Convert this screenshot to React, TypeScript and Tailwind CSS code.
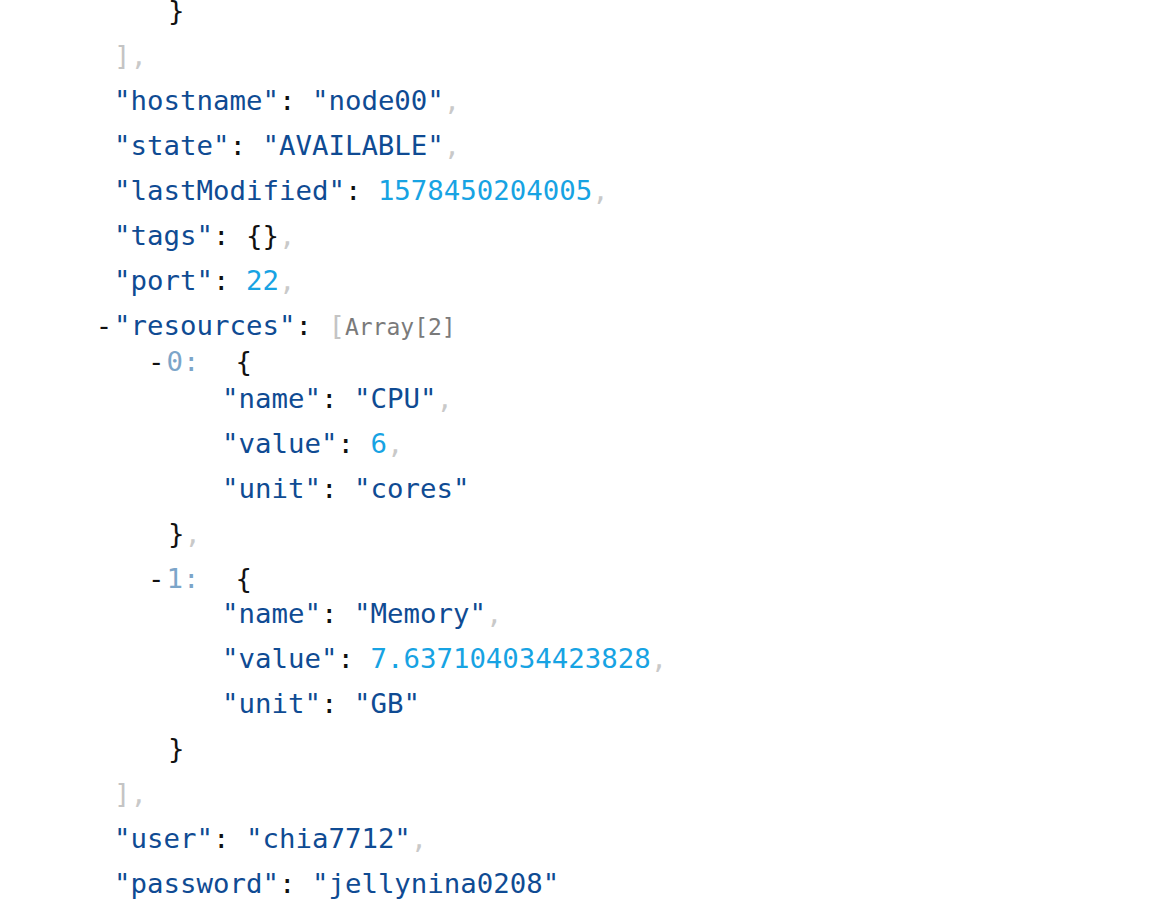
import React from "react";

const K = ({ children }: { children: React.ReactNode }) => (
  <span className="text-[#0f4b93]">{children}</span>
);
const S = ({ children }: { children: React.ReactNode }) => (
  <span className="text-[#0f4b93]">{children}</span>
);
const N = ({ children }: { children: React.ReactNode }) => (
  <span className="text-[#17a3e3]">{children}</span>
);
const P = ({ children }: { children: React.ReactNode }) => (
  <span className="text-[#111111]">{children}</span>
);
const C = () => <span className="text-[#c9c9c9]">,</span>;

function Row({
  children,
  className = "h-[45px] leading-[45px]",
  indent = "pl-0",
}: {
  children: React.ReactNode;
  className?: string;
  indent?: string;
}) {
  return <div className={`whitespace-pre ${className} ${indent}`}>{children}</div>;
}

function KV({ k, v, comma = true }: { k: string; v: React.ReactNode; comma?: boolean }) {
  return (
    <>
      <K>"{k}"</K>
      <P>: </P>
      {v}
      {comma && <C />}
    </>
  );
}

export default function App() {
  return (
    <div className="w-[1154px] h-[902px] overflow-hidden bg-white">
      <div
        className="-mt-[12px] pl-[114px] text-[27.4px]"
        style={{ fontFamily: '"DejaVu Sans Mono", "Liberation Mono", monospace' }}
      >
        <Row indent="pl-[54px]">
          <P>{"}"}</P>
        </Row>
        <Row>
          <span className="text-[#c4c4c4]">]</span>
          <C />
        </Row>
        <Row>
          <KV k="hostname" v={<S>"node00"</S>} />
        </Row>
        <Row>
          <KV k="state" v={<S>"AVAILABLE"</S>} />
        </Row>
        <Row>
          <KV k="lastModified" v={<N>1578450204005</N>} />
        </Row>
        <Row>
          <KV k="tags" v={<P>{"{}"}</P>} />
        </Row>
        <Row>
          <KV k="port" v={<N>22</N>} />
        </Row>
        <Row>
          <span className="-ml-[20px] inline-block w-[20px] text-center text-[#111111]">-</span>
          <K>"resources"</K>
          <P>: </P>
          <span className="text-[#c4c4c4]">[</span>
          <span className="text-[23px] text-[#7a7a7a]">Array[2]</span>
        </Row>
        <Row className="h-[28px] leading-[28px]" indent="pl-[34px]">
          <P>-</P>
          <span className="ml-[2px] text-[#7ca5c9]">0:</span>
          <P>{"  "}</P>
          <span className="ml-[3px] text-[#111111]">{"{"}</span>
        </Row>
        <Row indent="pl-[108px]">
          <KV k="name" v={<S>"CPU"</S>} />
        </Row>
        <Row indent="pl-[108px]">
          <KV k="value" v={<N>6</N>} />
        </Row>
        <Row indent="pl-[108px]">
          <KV k="unit" v={<S>"cores"</S>} comma={false} />
        </Row>
        <Row indent="pl-[54px]">
          <P>{"}"}</P>
          <C />
        </Row>
        <Row className="h-[35px] leading-[45px]" indent="pl-[34px]">
          <P>-</P>
          <span className="ml-[2px] text-[#7ca5c9]">1:</span>
          <P>{"  "}</P>
          <span className="ml-[3px] text-[#111111]">{"{"}</span>
        </Row>
        <Row indent="pl-[108px]">
          <KV k="name" v={<S>"Memory"</S>} />
        </Row>
        <Row indent="pl-[108px]">
          <KV k="value" v={<N>7.637104034423828</N>} />
        </Row>
        <Row indent="pl-[108px]">
          <KV k="unit" v={<S>"GB"</S>} comma={false} />
        </Row>
        <Row indent="pl-[54px]">
          <P>{"}"}</P>
        </Row>
        <Row>
          <span className="text-[#c4c4c4]">]</span>
          <C />
        </Row>
        <Row>
          <KV k="user" v={<S>"chia7712"</S>} />
        </Row>
        <Row>
          <KV k="password" v={<S>"jellynina0208"</S>} comma={false} />
        </Row>
      </div>
    </div>
  );
}
